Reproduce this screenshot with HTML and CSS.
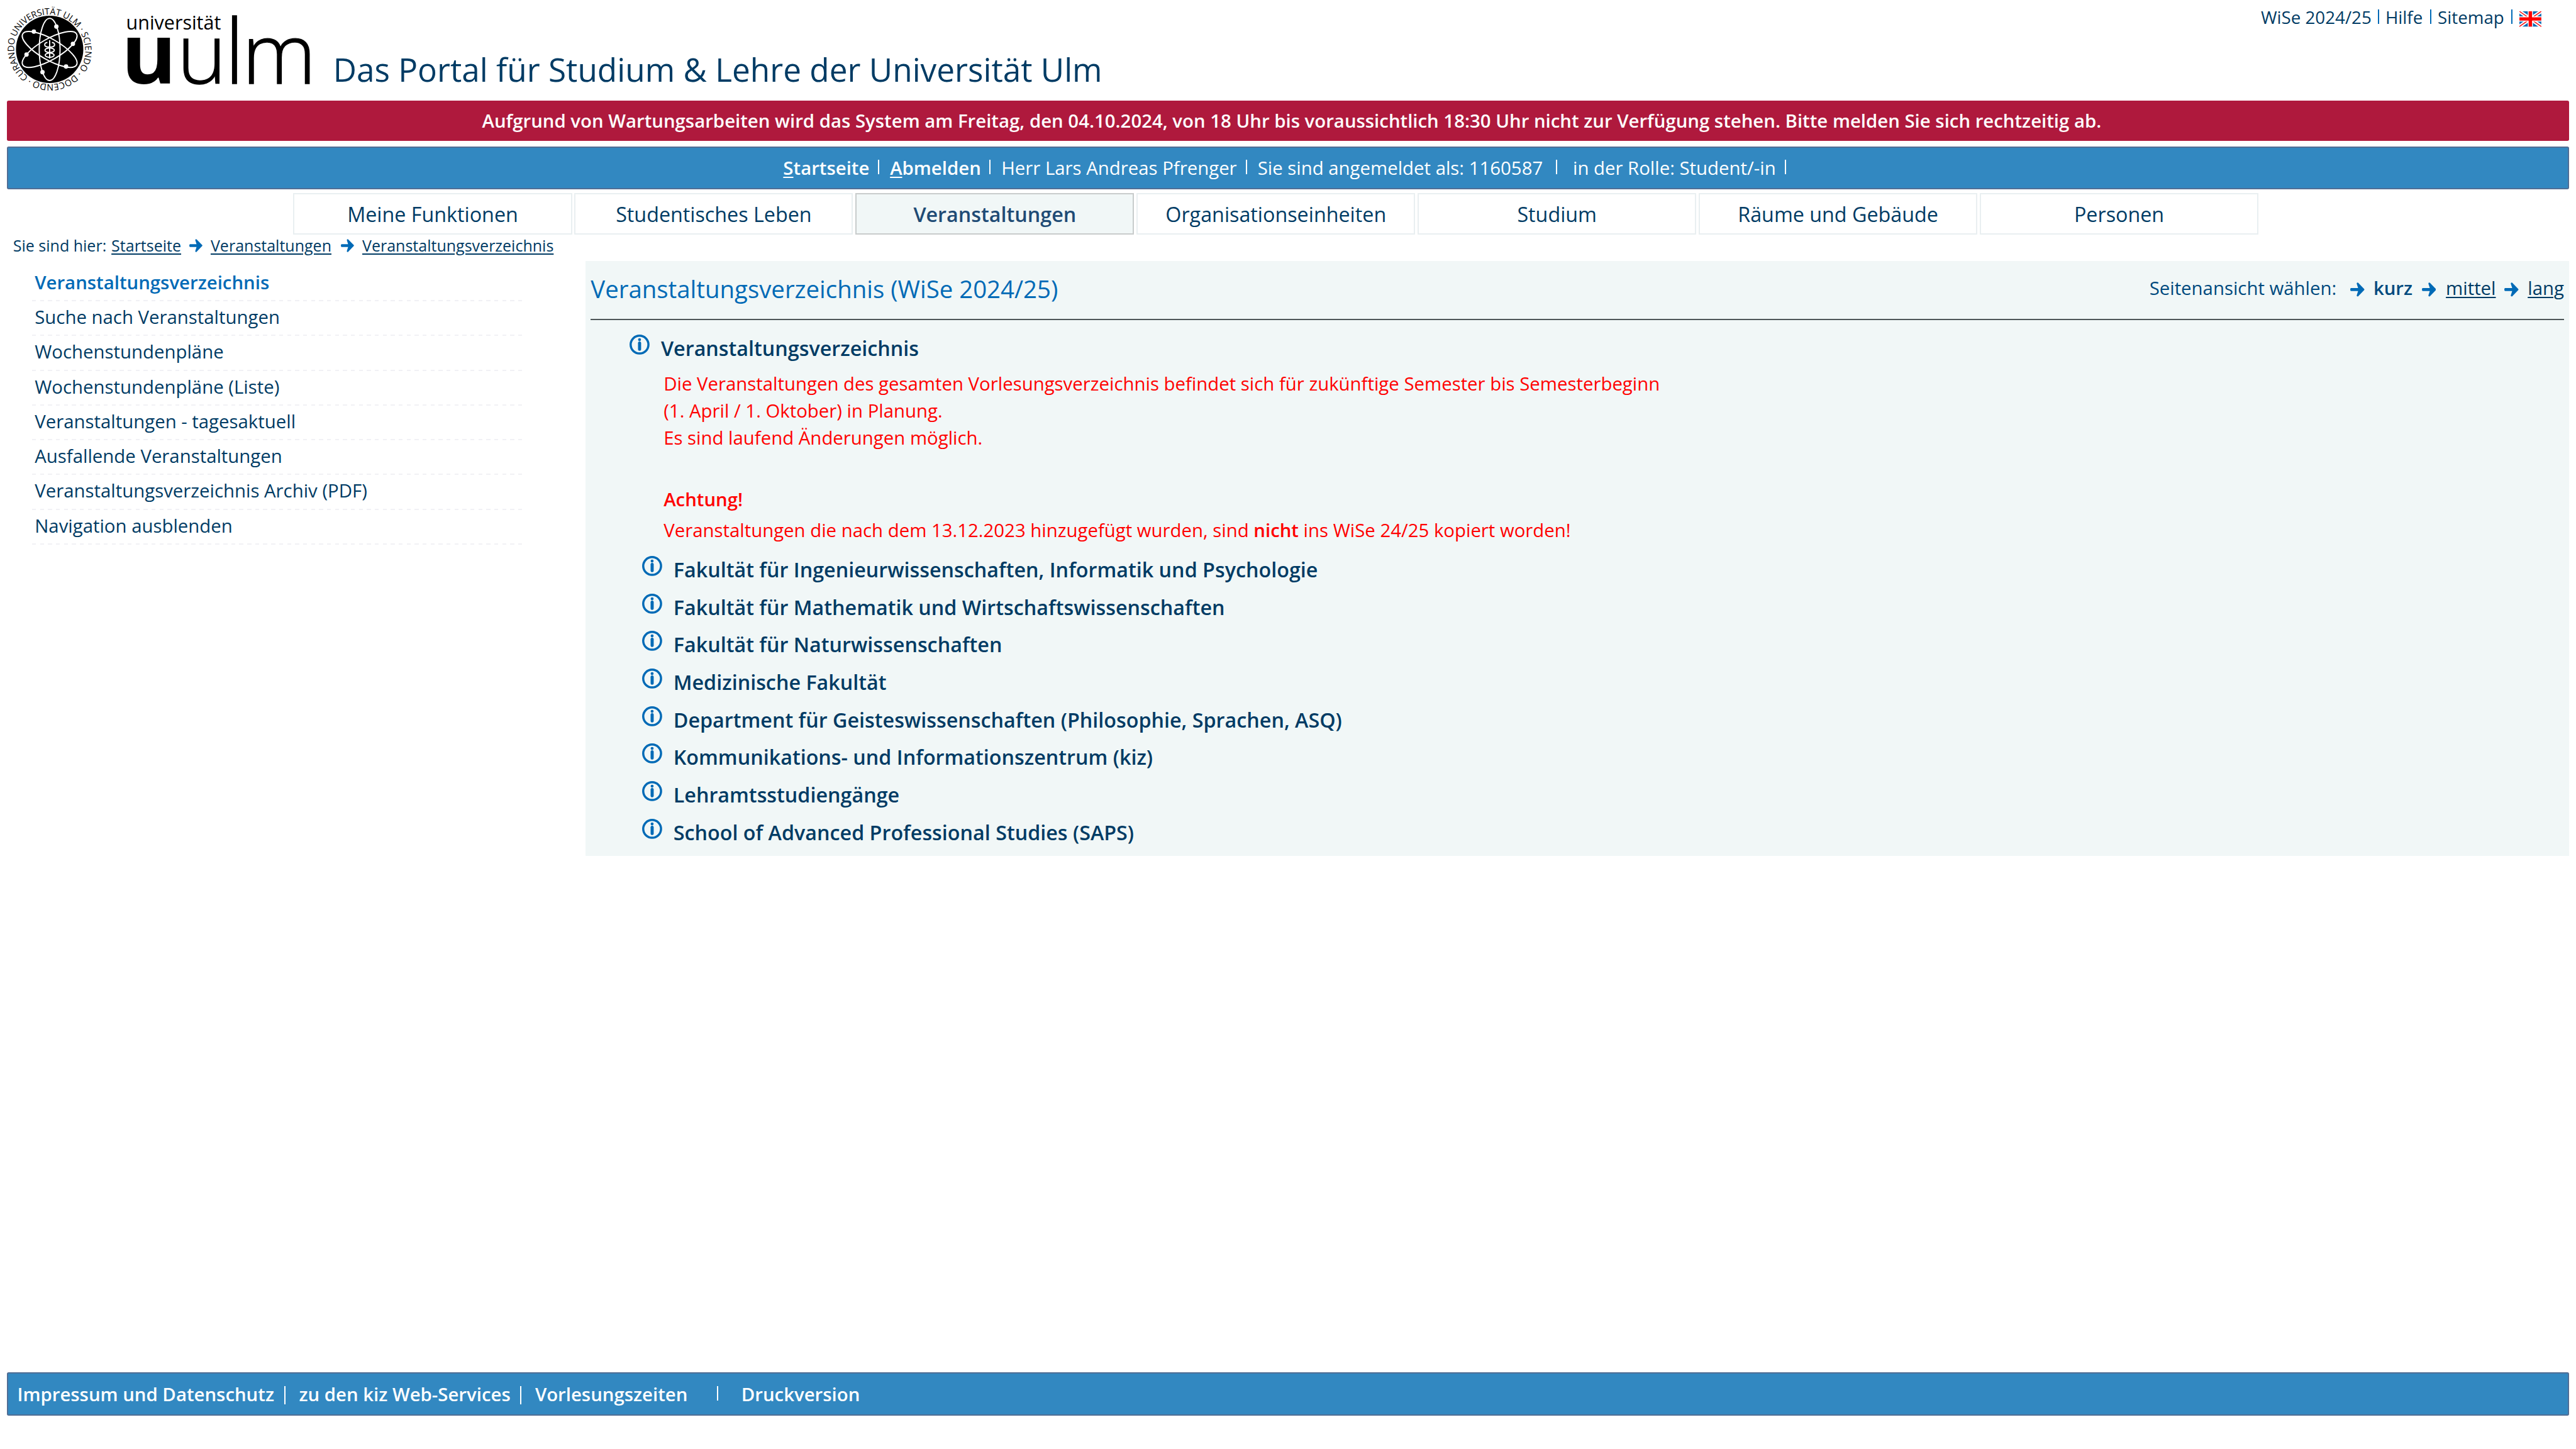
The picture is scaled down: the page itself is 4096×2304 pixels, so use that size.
FILE: index.html
```html
<!DOCTYPE html>
<html lang="de">
<head>
<meta charset="utf-8">
<title>Veranstaltungsverzeichnis (WiSe 2024/25)</title>
<link rel="stylesheet" href="styles.css">
</head>
<body>
<svg class="defs" width="0" height="0">
  <defs>
    <symbol id="arrow" viewBox="0 0 32 32">
      <path d="M2 12.6H17.6L14.6 3Q14.2 .4 16.6 .2Q17.4 .2 18 1L31.2 14.6Q32.6 16 31.2 17.4L18 31Q17.4 31.8 16.6 31.8Q14.2 31.6 14.6 29L17.6 19.4H2Q0 19.4 0 16Q0 12.6 2 12.6Z"/>
    </symbol>
    <symbol id="info" viewBox="0 0 45 45">
      <circle cx="22.4" cy="22.4" r="19.9" fill="none" stroke="currentColor" stroke-width="4.9"/>
      <circle cx="22.4" cy="11.4" r="3.3"/>
      <rect x="19" y="15.6" width="6.9" height="20.6" rx="3.2"/>
    </symbol>
  </defs>
</svg>

<header class="header">
  <svg class="logo" viewBox="0 0 700 225" role="img" aria-label="Universität Ulm">
    <circle cx="111" cy="110.5" r="75.3"/>
    <g fill="none" stroke="#fff" stroke-width="2.7">
      <ellipse cx="111" cy="110.5" rx="23.3" ry="69.5"/>
      <ellipse cx="111" cy="110.5" rx="23.3" ry="69.5" transform="rotate(60 111 110.5)"/>
      <ellipse cx="111" cy="110.5" rx="23.3" ry="69.5" transform="rotate(-60 111 110.5)"/>
      <path d="M111 90V131"/>
      <path d="M106 95C98 96 98 104 106 105H116C124 104 124 96 116 95"/>
      <ellipse cx="111" cy="112.3" rx="10.5" ry="5"/>
      <ellipse cx="111" cy="123.3" rx="10" ry="4.7"/>
    </g>
    <g fill="#fff">
      <circle cx="126" cy="59.3" r="4.9"/>
      <circle cx="75.7" cy="70.7" r="4.9"/>
      <circle cx="163" cy="98" r="4.9"/>
      <circle cx="59.3" cy="122" r="4.9"/>
      <circle cx="147.7" cy="148.7" r="4.9"/>
      <circle cx="95" cy="161.3" r="4.9"/>
    </g>
    <path id="ring" fill="none" d="M35.4 83A80.5 80.5 0 0 1 186.6 138A80.5 80.5 0 0 1 35.4 83"/>
    <text class="motto"><textPath href="#ring" textLength="500" lengthAdjust="spacing">UNIVERSITÄT ULM · SCIENDO · DOCENDO · CURANDO ·</textPath></text>
    <text class="word-small" x="282" y="65.7" textLength="212" lengthAdjust="spacingAndGlyphs">universität</text>
    <text class="word-bold" x="271" y="187">u</text>
    <text class="word-light" x="396" y="187">u</text>
    <text class="word-light" transform="translate(503 187) scale(1 1.06)">l</text>
    <text class="word-light" transform="translate(541 187)">m</text>
  </svg>
  <h1 class="title">Das Portal für Studium &amp; Lehre der Universität Ulm</h1>
  <nav class="meta">
    <span>WiSe 2024/25</span><i class="sep"></i>
    <a>Hilfe</a><i class="sep"></i>
    <a>Sitemap</a><i class="sep"></i>
    <svg class="flag" viewBox="0 0 49 34">
      <rect width="49" height="34" rx="3" fill="#0b6cb5"/>
      <path d="M0 0L49 34M49 0L0 34" stroke="#fff" stroke-width="8"/>
      <path d="M0 0L49 34M49 0L0 34" stroke="#f00" stroke-width="2"/>
      <path d="M24.5 0V34M0 17H49" stroke="#fff" stroke-width="11.4"/>
      <path d="M24.5 0V34M0 17H49" stroke="#f00" stroke-width="7.6"/>
    </svg>
  </nav>
</header>

<div class="alert">Aufgrund von Wartungsarbeiten wird das System am Freitag, den 04.10.2024, von 18 Uhr bis voraussichtlich 18:30 Uhr nicht zur Verfügung stehen. Bitte melden Sie sich rechtzeitig ab.</div>

<nav class="bar session">
  <b><u>S</u>tartseite</b><i class="sep"></i>
  <b><u>A</u>bmelden</b><i class="sep"></i>
  <span>Herr Lars Andreas Pfrenger</span><i class="sep"></i>
  <span>Sie sind angemeldet als: 1160587</span><i class="sep"></i>
  <span>in der Rolle: Student/-in</span><i class="sep"></i>
</nav>

<nav class="tabs">
  <a class="tab">Meine Funktionen</a>
  <a class="tab">Studentisches Leben</a>
  <a class="tab active">Veranstaltungen</a>
  <a class="tab">Organisationseinheiten</a>
  <a class="tab">Studium</a>
  <a class="tab">Räume und Gebäude</a>
  <a class="tab">Personen</a>
</nav>

<nav class="crumbs">
  <span>Sie sind hier:</span>
  <a class="link">Startseite</a>
  <svg class="arrow"><use href="#arrow"/></svg>
  <a class="link">Veranstaltungen</a>
  <svg class="arrow"><use href="#arrow"/></svg>
  <a class="link">Veranstaltungsverzeichnis</a>
</nav>

<div class="columns">
  <ul class="side">
    <li class="current">Veranstaltungsverzeichnis</li>
    <li>Suche nach Veranstaltungen</li>
    <li>Wochenstundenpläne</li>
    <li>Wochenstundenpläne (Liste)</li>
    <li>Veranstaltungen - tagesaktuell</li>
    <li>Ausfallende Veranstaltungen</li>
    <li>Veranstaltungsverzeichnis Archiv (PDF)</li>
    <li>Navigation ausblenden</li>
  </ul>

  <main class="content">
    <div class="content-head">
      <h2>Veranstaltungsverzeichnis (WiSe 2024/25)</h2>
      <div class="view">
        <span>Seitenansicht wählen:</span>
        <svg class="arrow"><use href="#arrow"/></svg>
        <b>kurz</b>
        <svg class="arrow"><use href="#arrow"/></svg>
        <a class="link">mittel</a>
        <svg class="arrow"><use href="#arrow"/></svg>
        <a class="link">lang</a>
      </div>
    </div>
    <div class="entry root"><svg class="info"><use href="#info"/></svg><a>Veranstaltungsverzeichnis</a></div>
    <div class="notice">
      <p>Die Veranstaltungen des gesamten Vorlesungsverzeichnis befindet sich für zukünftige Semester bis Semesterbeginn<br>(1. April / 1. Oktober) in Planung.<br>Es sind laufend Änderungen möglich.</p>
      <p class="warn"><b>Achtung!</b></p>
      <p>Veranstaltungen die nach dem 13.12.2023 hinzugefügt wurden, sind <b>nicht</b> ins WiSe 24/25 kopiert worden!</p>
    </div>
    <div class="entries">
      <div class="entry"><svg class="info"><use href="#info"/></svg><a>Fakultät für Ingenieurwissenschaften, Informatik und Psychologie</a></div>
      <div class="entry"><svg class="info"><use href="#info"/></svg><a>Fakultät für Mathematik und Wirtschaftswissenschaften</a></div>
      <div class="entry"><svg class="info"><use href="#info"/></svg><a>Fakultät für Naturwissenschaften</a></div>
      <div class="entry"><svg class="info"><use href="#info"/></svg><a>Medizinische Fakultät</a></div>
      <div class="entry"><svg class="info"><use href="#info"/></svg><a>Department für Geisteswissenschaften (Philosophie, Sprachen, ASQ)</a></div>
      <div class="entry"><svg class="info"><use href="#info"/></svg><a>Kommunikations- und Informationszentrum (kiz)</a></div>
      <div class="entry"><svg class="info"><use href="#info"/></svg><a>Lehramtsstudiengänge</a></div>
      <div class="entry"><svg class="info"><use href="#info"/></svg><a>School of Advanced Professional Studies (SAPS)</a></div>
    </div>
  </main>
</div>

<footer class="bar footer">
  <a>Impressum und Datenschutz</a><i class="sep tall"></i>
  <a>zu den kiz Web-Services</a><i class="sep tall"></i>
  <a>Vorlesungszeiten</a><i class="sep"></i>
  <a>Druckversion</a>
</footer>
</body>
</html>
```
FILE: styles.css
```css
* { box-sizing: border-box; }

html { font-size: 21.3333px; }

body {
  margin: 0;
  padding: 0 .5rem 2.5rem .5333rem;
  min-height: 108rem;
  display: flex;
  flex-direction: column;
  background: #fff;
  color: #003b64;
  font: 400 1.3765rem/2rem "Open Sans", sans-serif;
  white-space: nowrap;
}

h1, h2, p, ul { margin: 0; padding: 0; font-weight: 400; }
b { font-weight: 600; }
svg { display: block; }
.defs { position: absolute; }

.link {
  text-decoration: underline;
  text-decoration-thickness: .1rem;
  text-underline-offset: .15rem;
}

.arrow { width: 1.0667rem; height: 1.0667rem; fill: #006ab6; }
.sep { width: 2px; height: 1.1rem; background: currentColor; }

/* header */
.header { display: flex; align-items: flex-start; height: 7.5rem; }
.logo { width: 23.3333rem; height: 7.5rem; margin-left: -.5333rem; overflow: visible; }
.motto { font: 500 20px "Open Sans", sans-serif; }
.word-small { font: 400 43px "Open Sans", sans-serif; }
.word-bold { font: 700 188px "Open Sans", sans-serif; }
.word-light { font: 300 188px "Open Sans", sans-serif; stroke: #000; stroke-width: 1.8px; }
.title { margin: 3.6667rem 0 0 1.5rem; font-size: 2.405rem; line-height: 3.05rem; }
.meta {
  display: grid;
  grid-template-columns: 8.73rem .55rem 3.33rem .57rem 5.48rem .63rem 1.6333rem;
  margin: .3rem 2.0667rem 0 auto;
  font-size: 1.3rem;
  line-height: 2.05rem;
}
.meta .sep { margin-top: .4rem; background: #006ab6; }
.flag { width: 1.6333rem; height: 1.1333rem; margin-top: .5667rem; }

.alert {
  height: 3rem;
  padding-left: .52rem;
  border-radius: .13rem;
  background: #af193d;
  color: #fff;
  font-weight: 600;
  line-height: 3rem;
  text-align: center;
}

/* blue bars */
.bar {
  display: grid;
  justify-content: start;
  height: 3.2rem;
  border: .1rem solid #506e95;
  border-radius: .13rem;
  background: #3288c1;
  color: #fff;
  line-height: 3.04rem;
}
.bar .sep { margin-top: .9rem; }
.session {
  grid-template-columns: 7.23rem .73rem 7.57rem .73rem 18.37rem .73rem 22.4rem 1.1rem 15.97rem .73rem;
  margin-top: .4rem;
  padding-left: 57.6rem;
}
.session b, .session span { padding-left: .15rem; }
.session u { text-decoration-thickness: .1rem; text-underline-offset: .12rem; }
.footer {
  grid-template-columns: 19.9rem 1.1rem 16.5rem 1.1rem 13.57rem 1.8rem auto;
  margin-top: auto;
  padding-left: .66rem;
  font-weight: 600;
  line-height: 3.1rem;
}
.bar .tall { height: 1.4rem; }

/* tabs */
.tabs { display: flex; gap: .1833rem; margin: .3rem 0 0 21.3333rem; }
.tab {
  width: 20.7667rem;
  height: 3.0667rem;
  border: .1rem solid #e9eff1;
  font-size: 1.5136rem;
  line-height: 2.94rem;
  text-align: center;
}
.tab.active { border-color: #c8cccc; background: #f1f7f7; color: #1f4b75; font-weight: 600; }

.crumbs {
  display: grid;
  grid-template-columns: 7.33rem 5.8rem 1.6rem 9.7rem 1.6rem auto;
  justify-content: start;
  height: 2rem;
  padding-left: .44rem;
  font-size: 1.173rem;
  line-height: 1.67rem;
}
.crumbs .arrow { width: .98rem; height: .98rem; margin-top: .3667rem; }

/* columns */
.columns { display: flex; align-items: flex-start; }
.side { width: 36.5333rem; margin: .41rem 4.7rem 0 1.8667rem; list-style: none; }
.side li {
  height: 2.59rem;
  padding-left: .19rem;
  line-height: 2.4rem;
  background: repeating-linear-gradient(90deg, #f1f1f5 0 .3rem, transparent .3rem .594rem) left bottom / 100% .1rem no-repeat;
}
.side .current { color: #006ab6; font-weight: 600; }

.content { flex: 1; height: 44.35rem; background: #f1f7f7; }
.content-head {
  display: flex;
  justify-content: space-between;
  height: 4.4rem;
  margin: 0 .4rem;
  border-bottom: .1rem solid #4f5759;
}
h2 { color: #006ab6; font-size: 1.8rem; line-height: 4.14rem; }
.view {
  display: grid;
  grid-template-columns: 14.97rem 1.73rem 3.6rem 1.8rem 4.35rem 1.75rem 2.7rem;
  color: #004a7e;
  line-height: 4.05rem;
}
.view .arrow { margin-top: 1.6rem; }
.view .link { color: #003b64; justify-self: start; text-underline-offset: .13rem; }

.entry { display: flex; gap: .85rem; height: 2rem; font-size: 1.5136rem; line-height: 2.04rem; font-weight: 600; }
.info { width: 1.5rem; height: 1.5rem; color: #006ab6; fill: currentColor; }
.root { margin: 1.0667rem 0 0 3.2667rem; gap: .8667rem; }
.notice { margin: .69rem 0 0 5.83rem; color: #f00; }
.notice .warn { margin: 2.6067rem 0 .2967rem; }
.entries { display: flex; flex-direction: column; gap: .8rem; margin: .9067rem 0 0 4.21rem; }
```
